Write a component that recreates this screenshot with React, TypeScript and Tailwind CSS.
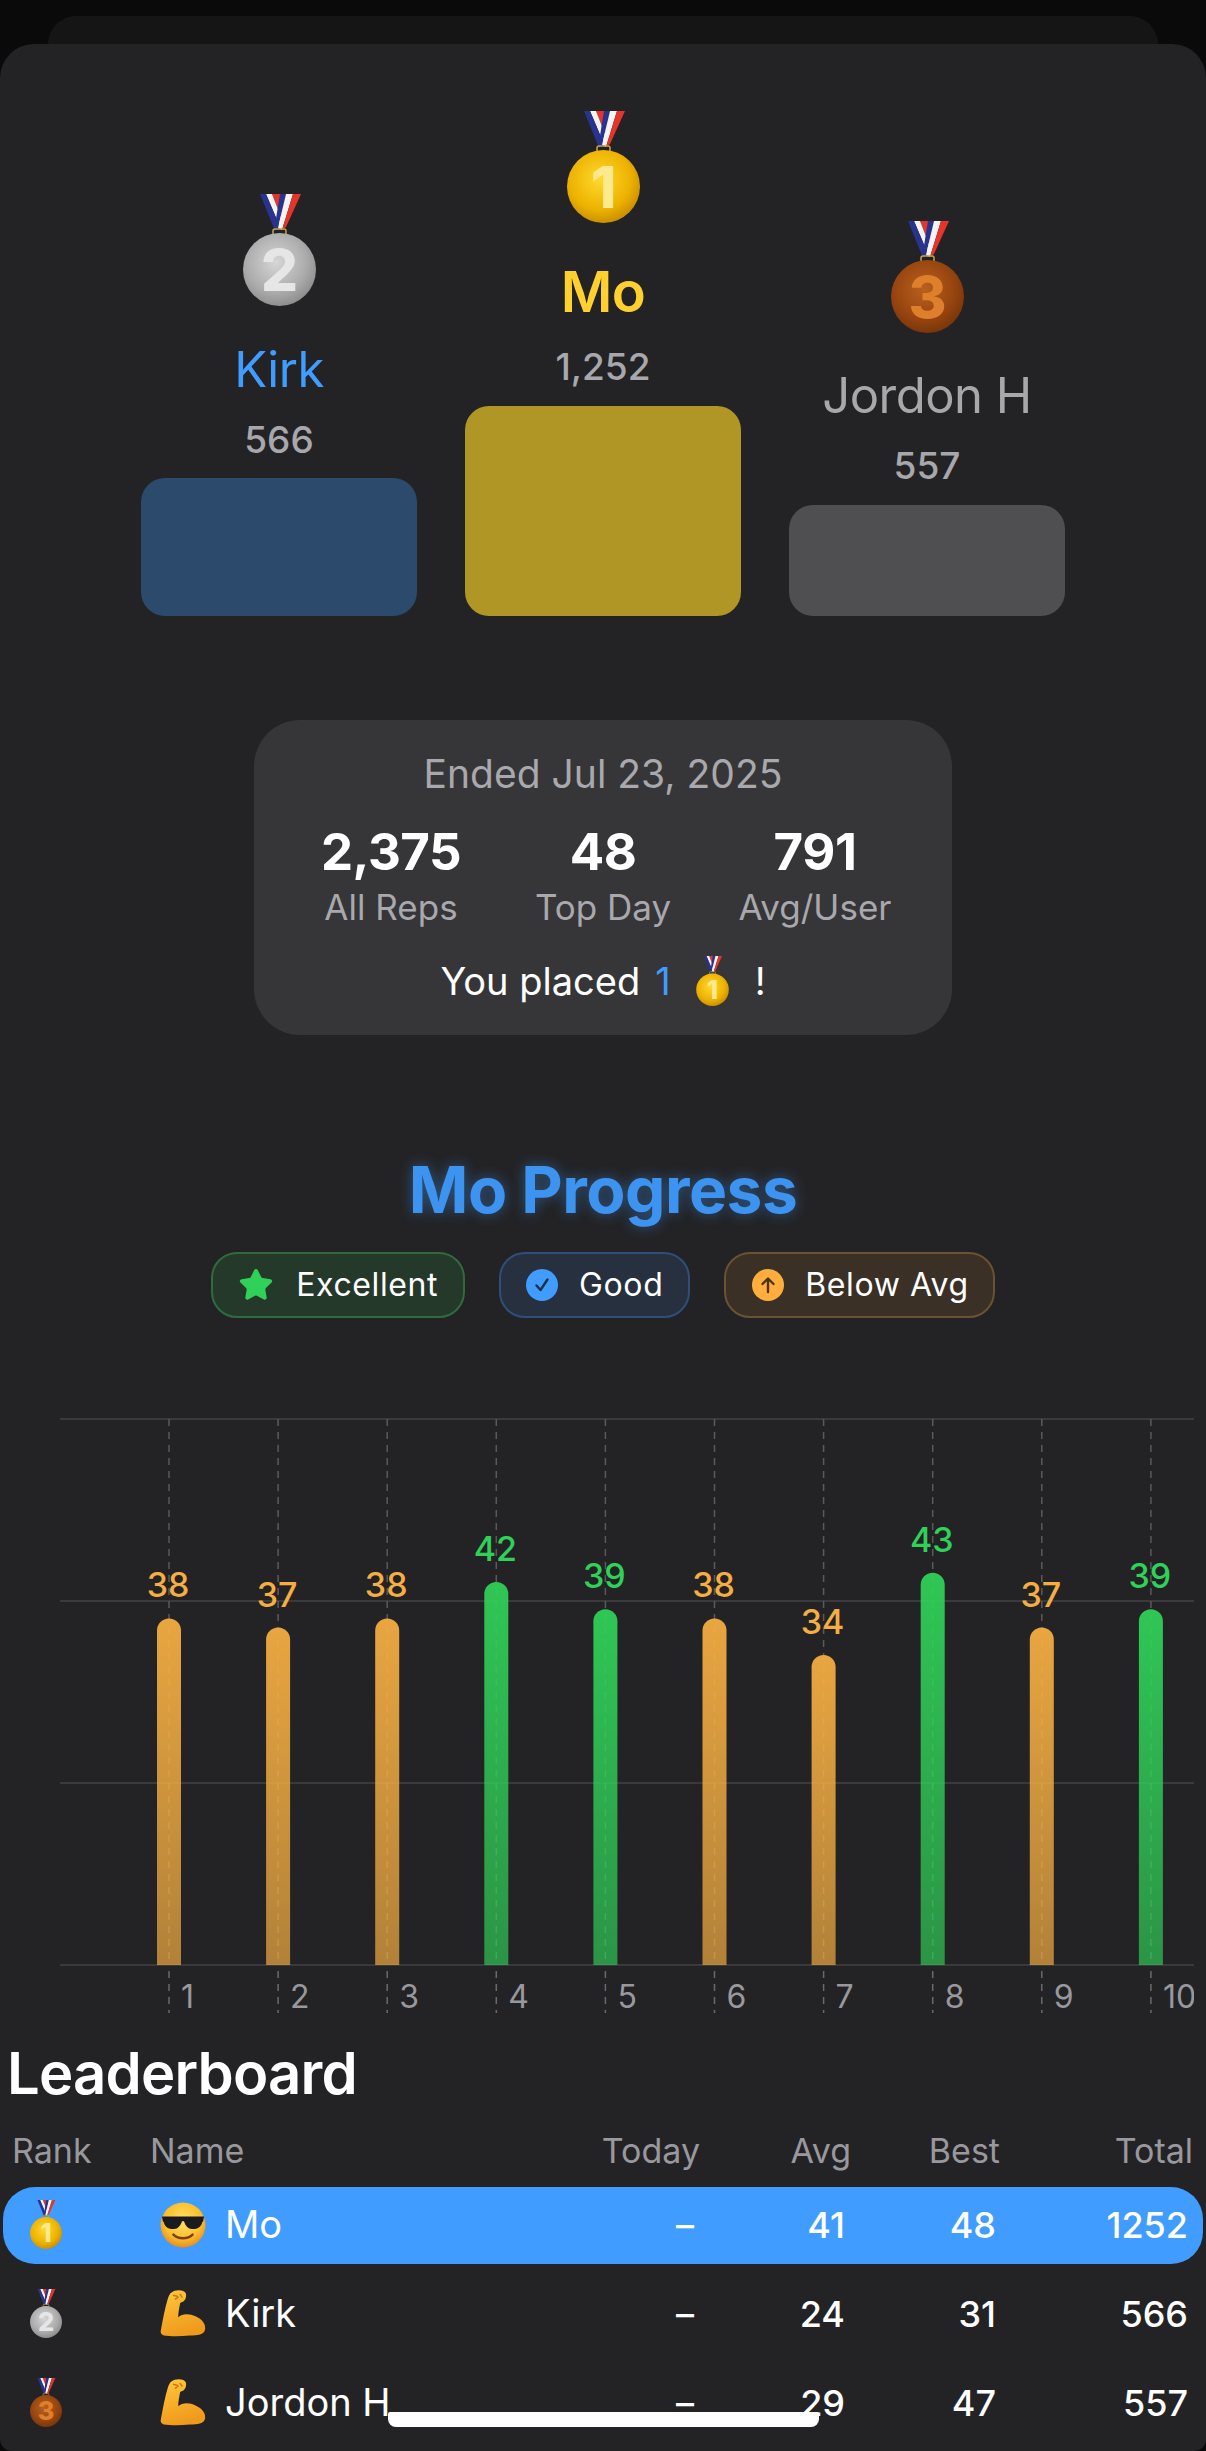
import { Star } from 'lucide-react';

const MEDALS = {
  1: { hi: '#FFD92E', mid: '#EDB200', lo: '#B87F00', digit: '#FFE98F', text: '1' },
  2: { hi: '#D6D6D6', mid: '#ABABAB', lo: '#7F7F7F', digit: '#E6E6E6', text: '2' },
  3: { hi: '#B9601F', mid: '#96440F', lo: '#6C2F06', digit: '#DE7F2B', text: '3' },
} as const;

function Medal({ rank, className }: { rank: 1 | 2 | 3; className: string }) {
  const m = MEDALS[rank];
  const id = `medal-${rank}`;
  return (
    <svg viewBox="0 0 73 112" className={className}>
      <defs>
        <radialGradient id={id} cx="45%" cy="40%" r="70%">
          <stop offset="0%" stopColor={m.hi} />
          <stop offset="60%" stopColor={m.mid} />
          <stop offset="100%" stopColor={m.lo} />
        </radialGradient>
      </defs>
      <polygon points="29,0 37,0 44,22 40,28" fill="#E5352B" />
      <polygon points="23,0 29,0 40,28 37,33" fill="#F4F4F4" />
      <polygon points="17,0 23,0 37,33 32,37" fill="#27338F" />
      <polygon points="37,0 43,0 35,34 31,37" fill="#27338F" />
      <polygon points="43,0 50,0 39,36 35,34" fill="#F4F4F4" />
      <polygon points="50,0 58,0 43,33 39,36" fill="#E5352B" />
      <rect x="30" y="35" width="13" height="6" rx="2" fill="none" stroke="#C9A24A" strokeWidth="1.5" />
      <circle cx="36.5" cy="75.5" r="36.5" fill={`url(#${id})`} />
      <text
        x="36.5"
        y="97"
        textAnchor="middle"
        fontSize="58"
        fontWeight="800"
        fill={m.digit}
        fontFamily="Inter, sans-serif"
      >
        {m.text}
      </text>
    </svg>
  );
}

function CoolFace() {
  return (
    <svg viewBox="0 0 48 48" className="w-[46px] h-[46px] shrink-0">
      <defs>
        <radialGradient id="face" cx="50%" cy="40%" r="62%">
          <stop offset="0%" stopColor="#FFE169" />
          <stop offset="65%" stopColor="#FBC02D" />
          <stop offset="100%" stopColor="#E8871E" />
        </radialGradient>
      </defs>
      <circle cx="24" cy="24" r="23.5" fill="url(#face)" />
      <path d="M2 15 L46 15 L45 20 L44 21 C43 27 37 29 32 28 C28 27 26 23 25 20 L23 20 C22 23 20 27 16 28 C11 29 5 27 4 21 L3 20 Z" fill="#1B1B1F" />
      <path d="M14 34 C19 39 29 39 34 34" fill="none" stroke="#7A3E0C" strokeWidth="2.6" strokeLinecap="round" />
    </svg>
  );
}

function Flex() {
  return (
    <svg viewBox="0 0 48 50" className="w-[46px] h-[49px] shrink-0">
      <defs>
        <linearGradient id="arm" x1="0" y1="0" x2="0.3" y2="1">
          <stop offset="0%" stopColor="#FFC83D" />
          <stop offset="100%" stopColor="#F09A1C" />
        </linearGradient>
      </defs>
      <path
        d="M12 3 C16 0 25 0 27 4 C28 8 26 12 23 13 L21 14 C20 20 19 24 19 29 C23 25 31 25 37 28 C44 31 48 36 47 42 C46 47 39 48 31 48 C21 49 11 49 4 48 C1 47 0 45 1 42 C3 31 5 20 8 10 C9 7 10 4 12 3 Z"
        fill="url(#arm)"
      />
      <path d="M14 6 L18 7 M16 10 L19 8 M21 5 L23 8" stroke="#C9730F" strokeWidth="1.4" strokeLinecap="round" />
    </svg>
  );
}

const days = [38, 37, 38, 42, 39, 38, 34, 43, 37, 39];

// svg y is offset from the page by 1400
function ProgressChart() {
  const base = 564;
  return (
    <svg viewBox="0 0 1194 620" className="mt-[83px] w-[1194px] h-[620px] block">
      <defs>
        <linearGradient id="barOrange" x1="0" y1="0" x2="0" y2="1">
          <stop offset="0%" stopColor="#F5AE42" stopOpacity="0.94" />
          <stop offset="100%" stopColor="#F5AE42" stopOpacity="0.68" />
        </linearGradient>
        <linearGradient id="barGreen" x1="0" y1="0" x2="0" y2="1">
          <stop offset="0%" stopColor="#30D158" stopOpacity="0.94" />
          <stop offset="100%" stopColor="#30D158" stopOpacity="0.65" />
        </linearGradient>
      </defs>
      {[18, 200, 382, base].map((y) => (
        <line key={y} x1="60" x2="1194" y1={y} y2={y} stroke="#434346" strokeWidth="1.5" />
      ))}
      {days.map((v, i) => {
        const x = 169 + i * 109.1;
        const top = base - v * 9.12;
        const good = v >= 39;
        return (
          <g key={i}>
            <line x1={x} x2={x} y1="18" y2={base} stroke="#5a5a5e" strokeWidth="1.5" strokeDasharray="7 6" />
            <line x1={x} x2={x} y1={base + 6} y2="612" stroke="#6a6a6e" strokeWidth="1.5" strokeDasharray="7 6" />
            <path
              d={`M${x - 12} ${base} V${top + 12} a12 12 0 0 1 24 0 V${base} Z`}
              fill={good ? 'url(#barGreen)' : 'url(#barOrange)'}
            />
            <text
              x={x - 1}
              y={top - 21}
              textAnchor="middle"
              fontSize="34"
              fontWeight="500"
              fill={good ? '#30D158' : '#F5AE42'}
            >
              {v}
            </text>
            <text x={x + 12} y="607" fontSize="32" fill="#98989D">
              {i + 1}
            </text>
          </g>
        );
      })}
    </svg>
  );
}

const podium = [
  {
    rank: 2 as const,
    name: 'Kirk',
    score: '566',
    nameCls: 'text-[49px] leading-[60px] mt-[34px] text-[#409CFF] font-normal',
    scoreCls: 'mt-[18px]',
    barCls: 'h-[138px] mt-[16px] bg-[#2C4A6B]',
  },
  {
    rank: 1 as const,
    name: 'Mo',
    score: '1,252',
    nameCls: 'text-[56px] leading-[64px] mt-[37px] text-[#FFD02E] font-semibold',
    scoreCls: 'mt-[21px]',
    barCls: 'h-[210px] mt-[17px] bg-[#B09725]',
  },
  {
    rank: 3 as const,
    name: 'Jordon H',
    score: '557',
    nameCls: 'text-[49px] leading-[60px] mt-[33px] text-[#A8A8AC] font-normal',
    scoreCls: 'mt-[18px]',
    barCls: 'h-[111px] mt-[17px] bg-[#4F4F51]',
  },
];

const rows = [
  { rank: 1 as const, name: 'Mo', avg: 41, best: 48, total: 1252, me: true },
  { rank: 2 as const, name: 'Kirk', avg: 24, best: 31, total: 566, me: false },
  { rank: 3 as const, name: 'Jordon H', avg: 29, best: 47, total: 557, me: false },
];

const tableCols = 'grid grid-cols-[138px_1fr_150px_151px_149px_193px]';

function App() {
  return (
    <div className="relative w-[1206px] h-[2451px] overflow-hidden bg-[#0A0A0B] pt-4 font-['Inter',sans-serif] text-white">
      {/* Sheet behind */}
      <div className="mx-[48px] h-[28px] rounded-t-[32px] bg-[#151516]" />

      <div className="h-[2407px] rounded-t-[34px] rounded-b-[12px] bg-[#232325] pt-[67px]">
        {/* Podium */}
        <div className="flex items-end justify-center gap-[48px]">
          {podium.map((p) => (
            <div key={p.rank} className="flex w-[276px] flex-col items-center">
              <Medal rank={p.rank} className="w-[73px] h-[112px]" />
              <div className={`tracking-[-0.5px] ${p.nameCls}`}>{p.name}</div>
              <div className={`text-[37px] leading-[44px] font-medium text-[#A8A8AC] ${p.scoreCls}`}>{p.score}</div>
              <div className={`w-full rounded-[24px] ${p.barCls}`} />
            </div>
          ))}
        </div>

        {/* Summary */}
        <div className="mx-auto mt-[104px] h-[315px] w-[698px] rounded-[46px] bg-[#363638] pt-[32px]">
          <div className="text-center text-[39px] leading-[44px] text-[#A8A8AD]">Ended Jul 23, 2025</div>
          <div className="mt-[26px] grid grid-cols-[212px_212px_212px] justify-center">
            {[
              ['2,375', 'All Reps'],
              ['48', 'Top Day'],
              ['791', 'Avg/User'],
            ].map(([value, label]) => (
              <div key={label} className="flex flex-col items-center">
                <div className="text-[51px] leading-[60px] font-bold tracking-[-0.5px]">{value}</div>
                <div className="text-[35px] leading-[44px] text-[#A8A8AD] mt-[3px]">{label}</div>
              </div>
            ))}
          </div>
          <div className="mt-[27px] flex h-[50px] items-center justify-center text-[38px]">
            <span>You placed</span>
            <span className="ml-[15px] text-[#409CFF]">1</span>
            <Medal rank={1} className="ml-[25px] w-[33px] h-[50px]" />
            <span className="ml-[26px]">!</span>
          </div>
        </div>

        {/* Progress */}
        <h2 className="mt-[115px] text-center text-[64px] leading-[80px] font-bold tracking-[-0.5px] text-[#3D93F0] [text-shadow:0_0_14px_rgba(64,156,255,0.45)]">
          Mo Progress
        </h2>
        <div className="mt-[22px] flex justify-center gap-[34px]">
          <div className="flex h-[66px] items-center gap-[22px] rounded-[26px] border-2 border-[#2F6B3E] bg-[#25392B] pl-[25px] pr-[25px]">
            <Star className="w-[36px] h-[36px] text-[#30D158]" fill="currentColor" strokeWidth={1.5} />
            <span className="text-[32px] tracking-[0.6px]">Excellent</span>
          </div>
          <div className="flex h-[66px] items-center gap-[21px] rounded-[26px] border-2 border-[#2F4F78] bg-[#26303F] pl-[25px] pr-[25px]">
            <svg viewBox="0 0 32 32" className="w-[32px] h-[32px]">
              <circle cx="16" cy="16" r="16" fill="#409CFF" />
              <path d="M10.5 16.5 L14.5 21 L21.5 10.5" fill="none" stroke="#1F2F45" strokeWidth="2.4" strokeLinecap="round" strokeLinejoin="round" />
            </svg>
            <span className="text-[32px] tracking-[0.6px]">Good</span>
          </div>
          <div className="flex h-[66px] items-center gap-[21px] rounded-[26px] border-2 border-[#6A5233] bg-[#3A3026] pl-[26px] pr-[24px]">
            <svg viewBox="0 0 32 32" className="w-[32px] h-[32px]">
              <circle cx="16" cy="16" r="16" fill="#FFAE3D" />
              <path d="M16 23 V10 M10.5 15 L16 9.5 L21.5 15" fill="none" stroke="#4A3414" strokeWidth="2.4" strokeLinecap="round" strokeLinejoin="round" />
            </svg>
            <span className="text-[32px] tracking-[0.6px]">Below Avg</span>
          </div>
        </div>

        <ProgressChart />

        {/* Leaderboard */}
        <h2 className="mt-[16px] pl-[7px] text-[58px] leading-[72px] font-semibold tracking-[-0.8px]">Leaderboard</h2>
        <div className={`${tableCols} mt-[22px] ml-[12px] w-[1181px] text-[34px] leading-[40px] text-[#98989D]`}>
          <span>Rank</span>
          <span>Name</span>
          <span className="text-right">Today</span>
          <span className="text-right">Avg</span>
          <span className="text-right">Best</span>
          <span className="text-right">Total</span>
        </div>
        <div className="mt-[16px] flex flex-col gap-[12px] px-[3px]">
          {rows.map((r) => (
            <div
              key={r.name}
              className={`${tableCols} h-[77px] items-center rounded-[32px] pb-[2px] pl-[9px] pr-[11px] text-[36px] font-medium ${r.me ? 'bg-[#409CFF]' : ''}`}
            >
              <div className="pl-[18px]">
                <Medal rank={r.rank} className="w-[32px] h-[49px]" />
              </div>
              <div className="flex items-center gap-[19px] pl-[10px] text-[38px] font-normal">
                {r.me ? <CoolFace /> : <Flex />}
                <span>{r.name}</span>
              </div>
              <div className="pr-[5px] text-right">–</div>
              <div className="pr-[5px] text-right">{r.avg}</div>
              <div className="pr-[3px] text-right">{r.best}</div>
              <div className="pr-[4px] text-right">{r.total}</div>
            </div>
          ))}
        </div>
      </div>

      {/* Home indicator */}
      <div className="absolute left-[388px] top-[2412px] h-[15px] w-[431px] rounded-b-[8px] rounded-t-[2px] bg-white" />
    </div>
  );
}

export default App;
